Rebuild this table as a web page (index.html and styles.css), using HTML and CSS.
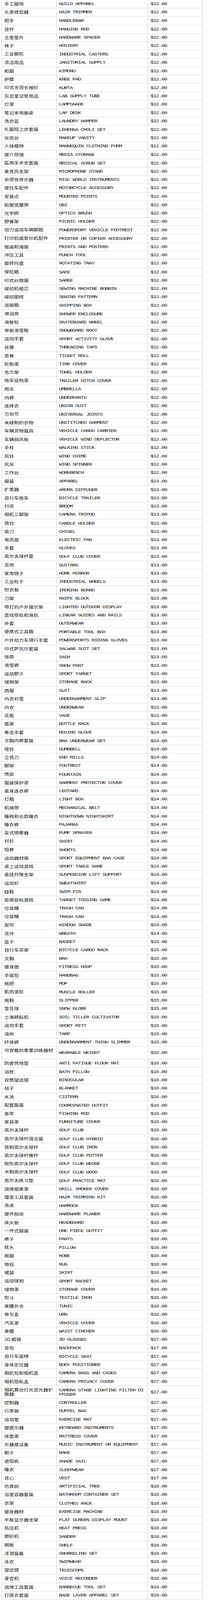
FILE: index.html
```html
<!DOCTYPE html>
<html lang="zh">
<head>
<meta charset="utf-8">
<title>商品价格表</title>
<link rel="stylesheet" href="styles.css">
</head>
<body>
<div class="frame">
<div class="sheet">
<table class="list">
<colgroup><col class="c-zh"><col class="c-en"><col class="c-price"></colgroup>
<tbody>
<tr><td class="zh">手工服饰</td><td class="en">GUILD APPAREL</td><td class="price">$12.00</td></tr>
<tr><td class="zh">头发修剪器</td><td class="en">HAIR TRIMMER</td><td class="price">$12.00</td></tr>
<tr><td class="zh">把手</td><td class="en">HANDLEBAR</td><td class="price">$12.00</td></tr>
<tr><td class="zh">挂杆</td><td class="en">HANGING ROD</td><td class="price">$12.00</td></tr>
<tr><td class="zh">五金垫片</td><td class="en">HARDWARE SPACER</td><td class="price">$12.00</td></tr>
<tr><td class="zh">袜子</td><td class="en">HOSIERY</td><td class="price">$12.00</td></tr>
<tr><td class="zh">工业脚轮</td><td class="en">INDUSTRIAL CASTERS</td><td class="price">$12.00</td></tr>
<tr><td class="zh">清洁用品</td><td class="en">JANITORIAL SUPPLY</td><td class="price">$12.00</td></tr>
<tr><td class="zh">和服</td><td class="en">KIMONO</td><td class="price">$12.00</td></tr>
<tr><td class="zh">护膝</td><td class="en">KNEE PAD</td><td class="price">$12.00</td></tr>
<tr><td class="zh">印式无领长袖衫</td><td class="en">KURTA</td><td class="price">$12.00</td></tr>
<tr><td class="zh">实验室试管用品</td><td class="en">LAB SUPPLY TUBE</td><td class="price">$12.00</td></tr>
<tr><td class="zh">灯罩</td><td class="en">LAMPSHADE</td><td class="price">$12.00</td></tr>
<tr><td class="zh">笔记本电脑桌</td><td class="en">LAP DESK</td><td class="price">$12.00</td></tr>
<tr><td class="zh">洗衣篮</td><td class="en">LAUNDRY HAMPER</td><td class="price">$12.00</td></tr>
<tr><td class="zh">礼服短上衣套装</td><td class="en">LEHENGA CHOLI SET</td><td class="price">$12.00</td></tr>
<tr><td class="zh">化妆台</td><td class="en">MAKEUP VANITY</td><td class="price">$12.00</td></tr>
<tr><td class="zh">人体模特</td><td class="en">MANNEQUIN CLOTHING FORM</td><td class="price">$12.00</td></tr>
<tr><td class="zh">媒介存储</td><td class="en">MEDIA STORAGE</td><td class="price">$12.00</td></tr>
<tr><td class="zh">医用手术衣套装</td><td class="en">MEDICAL SCRUB SET</td><td class="price">$12.00</td></tr>
<tr><td class="zh">麦克风支架</td><td class="en">MICROPHONE STAND</td><td class="price">$12.00</td></tr>
<tr><td class="zh">杂项世界乐器</td><td class="en">MISC WORLD INSTRUMENTS</td><td class="price">$12.00</td></tr>
<tr><td class="zh">摩托车配件</td><td class="en">MOTORCYCLE ACCESSORY</td><td class="price">$12.00</td></tr>
<tr><td class="zh">安装点</td><td class="en">MOUNTED POINTS</td><td class="price">$12.00</td></tr>
<tr><td class="zh">和服宽腰带</td><td class="en">OBI</td><td class="price">$12.00</td></tr>
<tr><td class="zh">光学刷</td><td class="en">OPTICS BRUSH</td><td class="price">$12.00</td></tr>
<tr><td class="zh">野餐架</td><td class="en">PICNIC HOLDER</td><td class="price">$12.00</td></tr>
<tr><td class="zh">动力运动车辆脚踏</td><td class="en">POWERSPORT VEHICLE FOOTREST</td><td class="price">$12.00</td></tr>
<tr><td class="zh">打印机或复印机配件</td><td class="en">PRINTER OR COPIER ACCESSORY</td><td class="price">$12.00</td></tr>
<tr><td class="zh">版画和海报</td><td class="en">PRINTS AND POSTERS</td><td class="price">$12.00</td></tr>
<tr><td class="zh">冲压工具</td><td class="en">PUNCH TOOL</td><td class="price">$12.00</td></tr>
<tr><td class="zh">旋转托盘</td><td class="en">ROTATING TRAY</td><td class="price">$12.00</td></tr>
<tr><td class="zh">保险箱</td><td class="en">SAFE</td><td class="price">$12.00</td></tr>
<tr><td class="zh">印式纱丽服</td><td class="en">SAREE</td><td class="price">$12.00</td></tr>
<tr><td class="zh">缝纫机梭芯</td><td class="en">SEWING MACHINE BOBBIN</td><td class="price">$12.00</td></tr>
<tr><td class="zh">缝纫图样</td><td class="en">SEWING PATTERN</td><td class="price">$12.00</td></tr>
<tr><td class="zh">运输箱</td><td class="en">SHIPPING BOX</td><td class="price">$12.00</td></tr>
<tr><td class="zh">淋浴房</td><td class="en">SHOWER ENCLOSURE</td><td class="price">$12.00</td></tr>
<tr><td class="zh">滑板轮</td><td class="en">SKATEBOARD WHEEL</td><td class="price">$12.00</td></tr>
<tr><td class="zh">单板滑雪靴</td><td class="en">SNOWBOARD BOOT</td><td class="price">$12.00</td></tr>
<tr><td class="zh">运动手套</td><td class="en">SPORT ACTIVITY GLOVE</td><td class="price">$12.00</td></tr>
<tr><td class="zh">丝锥</td><td class="en">THREADING TAPS</td><td class="price">$12.00</td></tr>
<tr><td class="zh">票卷</td><td class="en">TICKET ROLL</td><td class="price">$12.00</td></tr>
<tr><td class="zh">轮胎罩</td><td class="en">TIRE COVER</td><td class="price">$12.00</td></tr>
<tr><td class="zh">毛巾架</td><td class="en">TOWEL HOLDER</td><td class="price">$12.00</td></tr>
<tr><td class="zh">拖车挂钩罩</td><td class="en">TRAILER HITCH COVER</td><td class="price">$12.00</td></tr>
<tr><td class="zh">雨伞</td><td class="en">UMBRELLA</td><td class="price">$12.00</td></tr>
<tr><td class="zh">内裤</td><td class="en">UNDERPANTS</td><td class="price">$12.00</td></tr>
<tr><td class="zh">连体衣</td><td class="en">UNION SUIT</td><td class="price">$12.00</td></tr>
<tr><td class="zh">万向节</td><td class="en">UNIVERSAL JOINTS</td><td class="price">$12.00</td></tr>
<tr><td class="zh">未缝制的衣物</td><td class="en">UNSTITCHED GARMENT</td><td class="price">$12.00</td></tr>
<tr><td class="zh">车辆货物载具</td><td class="en">VEHICLE CARGO CARRIER</td><td class="price">$12.00</td></tr>
<tr><td class="zh">车辆挡风板</td><td class="en">VEHICLE WIND DEFLECTOR</td><td class="price">$12.00</td></tr>
<tr><td class="zh">手杖</td><td class="en">WALKING STICK</td><td class="price">$12.00</td></tr>
<tr><td class="zh">风铃</td><td class="en">WIND CHIME</td><td class="price">$12.00</td></tr>
<tr><td class="zh">风车</td><td class="en">WIND SPINNER</td><td class="price">$12.00</td></tr>
<tr><td class="zh">工作台</td><td class="en">WORKBENCH</td><td class="price">$12.00</td></tr>
<tr><td class="zh">服装</td><td class="en">APPAREL</td><td class="price">$13.00</td></tr>
<tr><td class="zh">扩香器</td><td class="en">AROMA DIFFUSER</td><td class="price">$13.00</td></tr>
<tr><td class="zh">自行车拖车</td><td class="en">BICYCLE TRAILER</td><td class="price">$13.00</td></tr>
<tr><td class="zh">扫帚</td><td class="en">BROOM</td><td class="price">$13.00</td></tr>
<tr><td class="zh">相机三脚架</td><td class="en">CAMERA TRIPOD</td><td class="price">$13.00</td></tr>
<tr><td class="zh">烛台</td><td class="en">CANDLE HOLDER</td><td class="price">$13.00</td></tr>
<tr><td class="zh">凿刀</td><td class="en">CHISEL</td><td class="price">$13.00</td></tr>
<tr><td class="zh">电风扇</td><td class="en">ELECTRIC FAN</td><td class="price">$13.00</td></tr>
<tr><td class="zh">手套</td><td class="en">GLOVES</td><td class="price">$13.00</td></tr>
<tr><td class="zh">高尔夫球杆套</td><td class="en">GOLF CLUB COVER</td><td class="price">$13.00</td></tr>
<tr><td class="zh">吉他</td><td class="en">GUITARS</td><td class="price">$13.00</td></tr>
<tr><td class="zh">家用镜子</td><td class="en">HOME MIRROR</td><td class="price">$13.00</td></tr>
<tr><td class="zh">工业轮子</td><td class="en">INDUSTRIAL WHEELS</td><td class="price">$13.00</td></tr>
<tr><td class="zh">熨衣板</td><td class="en">IRONING BOARD</td><td class="price">$13.00</td></tr>
<tr><td class="zh">刀架</td><td class="en">KNIFE BLOCK</td><td class="price">$13.00</td></tr>
<tr><td class="zh">带灯的户外展示架</td><td class="en">LIGHTED OUTDOOR DISPLAY</td><td class="price">$13.00</td></tr>
<tr><td class="zh">直线导轨和滑轨</td><td class="en">LINEAR GUIDES AND RAILS</td><td class="price">$13.00</td></tr>
<tr><td class="zh">外套</td><td class="en">OUTERWEAR</td><td class="price">$13.00</td></tr>
<tr><td class="zh">便携式工具箱</td><td class="en">PORTABLE TOOL BOX</td><td class="price">$13.00</td></tr>
<tr><td class="zh">户外动力车骑行手套</td><td class="en">POWERSPORTS RIDING GLOVES</td><td class="price">$13.00</td></tr>
<tr><td class="zh">印式萨瓦尔套装</td><td class="en">SALWAR SUIT SET</td><td class="price">$13.00</td></tr>
<tr><td class="zh">饰带</td><td class="en">SASH</td><td class="price">$13.00</td></tr>
<tr><td class="zh">滑雪裤</td><td class="en">SNOW PANT</td><td class="price">$13.00</td></tr>
<tr><td class="zh">运动靶子</td><td class="en">SPORT TARGET</td><td class="price">$13.00</td></tr>
<tr><td class="zh">储物架</td><td class="en">STORAGE RACK</td><td class="price">$13.00</td></tr>
<tr><td class="zh">西服</td><td class="en">SUIT</td><td class="price">$13.00</td></tr>
<tr><td class="zh">内衣衬里</td><td class="en">UNDERGARMENT SLIP</td><td class="price">$13.00</td></tr>
<tr><td class="zh">内衣</td><td class="en">UNDERWEAR</td><td class="price">$13.00</td></tr>
<tr><td class="zh">花瓶</td><td class="en">VASE</td><td class="price">$13.00</td></tr>
<tr><td class="zh">瓶架</td><td class="en">BOTTLE RACK</td><td class="price">$14.00</td></tr>
<tr><td class="zh">拳击手套</td><td class="en">BOXING GLOVE</td><td class="price">$14.00</td></tr>
<tr><td class="zh">文胸内裤套装</td><td class="en">BRA UNDERWEAR SET</td><td class="price">$14.00</td></tr>
<tr><td class="zh">哑铃</td><td class="en">DUMBBELL</td><td class="price">$14.00</td></tr>
<tr><td class="zh">立铣刀</td><td class="en">END MILLS</td><td class="price">$14.00</td></tr>
<tr><td class="zh">脚架</td><td class="en">FOOTREST</td><td class="price">$14.00</td></tr>
<tr><td class="zh">喷泉</td><td class="en">FOUNTAIN</td><td class="price">$14.00</td></tr>
<tr><td class="zh">服装保护罩</td><td class="en">GARMENT PROTECTOR COVER</td><td class="price">$14.00</td></tr>
<tr><td class="zh">紧身连衣裤</td><td class="en">LEOTARD</td><td class="price">$14.00</td></tr>
<tr><td class="zh">灯箱</td><td class="en">LIGHT BOX</td><td class="price">$14.00</td></tr>
<tr><td class="zh">机械带</td><td class="en">MECHANICAL BELT</td><td class="price">$14.00</td></tr>
<tr><td class="zh">睡袍和长款睡衣</td><td class="en">NIGHTGOWN NIGHTSHIRT</td><td class="price">$14.00</td></tr>
<tr><td class="zh">睡衣裤</td><td class="en">PAJAMAS</td><td class="price">$14.00</td></tr>
<tr><td class="zh">泵式喷雾器</td><td class="en">PUMP SPRAYER</td><td class="price">$14.00</td></tr>
<tr><td class="zh">衬衫</td><td class="en">SHIRT</td><td class="price">$14.00</td></tr>
<tr><td class="zh">短裤</td><td class="en">SHORTS</td><td class="price">$14.00</td></tr>
<tr><td class="zh">运动器材袋</td><td class="en">SPORT EQUIPMENT BAG CASE</td><td class="price">$14.00</td></tr>
<tr><td class="zh">桌上运动游戏</td><td class="en">SPORT TABLE GAME</td><td class="price">$14.00</td></tr>
<tr><td class="zh">悬挂升降支架</td><td class="en">SUSPENSION LIFT SUPPORT</td><td class="price">$14.00</td></tr>
<tr><td class="zh">运动衫</td><td class="en">SWEATSHIRT</td><td class="price">$14.00</td></tr>
<tr><td class="zh">蛙鞋</td><td class="en">SWIM FIN</td><td class="price">$14.00</td></tr>
<tr><td class="zh">投掷目标游戏</td><td class="en">TARGET TOSSING GAME</td><td class="price">$14.00</td></tr>
<tr><td class="zh">垃圾桶</td><td class="en">TRASH CAN</td><td class="price">$14.00</td></tr>
<tr><td class="zh">垃圾桶</td><td class="en">TRASH CAN</td><td class="price">$14.00</td></tr>
<tr><td class="zh">窗帘</td><td class="en">WINDOW SHADE</td><td class="price">$14.00</td></tr>
<tr><td class="zh">花环</td><td class="en">WREATH</td><td class="price">$14.00</td></tr>
<tr><td class="zh">篮子</td><td class="en">BASKET</td><td class="price">$15.00</td></tr>
<tr><td class="zh">自行车货架</td><td class="en">BICYCLE CARGO RACK</td><td class="price">$15.00</td></tr>
<tr><td class="zh">文胸</td><td class="en">BRA</td><td class="price">$15.00</td></tr>
<tr><td class="zh">健身圈</td><td class="en">FITNESS HOOP</td><td class="price">$15.00</td></tr>
<tr><td class="zh">手提包</td><td class="en">HANDBAG</td><td class="price">$15.00</td></tr>
<tr><td class="zh">拖把</td><td class="en">MOP</td><td class="price">$15.00</td></tr>
<tr><td class="zh">肌肉滚轮</td><td class="en">MUSCLE ROLLER</td><td class="price">$15.00</td></tr>
<tr><td class="zh">拖鞋</td><td class="en">SLIPPER</td><td class="price">$15.00</td></tr>
<tr><td class="zh">雪花球</td><td class="en">SNOW GLOBE</td><td class="price">$15.00</td></tr>
<tr><td class="zh">土壤耕耘机</td><td class="en">SOIL TILLER CULTIVATOR</td><td class="price">$15.00</td></tr>
<tr><td class="zh">运动手套</td><td class="en">SPORT MITT</td><td class="price">$15.00</td></tr>
<tr><td class="zh">油布</td><td class="en">TARP</td><td class="price">$15.00</td></tr>
<tr><td class="zh">纤体裤</td><td class="en">UNDERGARMENT THIGH SLIMMER</td><td class="price">$15.00</td></tr>
<tr><td class="zh zh-overflow">可穿戴的重量训练器材</td><td class="en">WEARABLE WEIGHT</td><td class="price">$15.00</td></tr>
<tr><td class="zh">防疲劳地垫</td><td class="en">ANTI FATIGUE FLOOR MAT</td><td class="price">$16.00</td></tr>
<tr><td class="zh">浴枕</td><td class="en">BATH PILLOW</td><td class="price">$16.00</td></tr>
<tr><td class="zh">双筒望远镜</td><td class="en">BINOCULAR</td><td class="price">$16.00</td></tr>
<tr><td class="zh">毯子</td><td class="en">BLANKET</td><td class="price">$16.00</td></tr>
<tr><td class="zh">水池</td><td class="en">CISTERN</td><td class="price">$16.00</td></tr>
<tr><td class="zh">配套服装</td><td class="en">COORDINATED OUTFIT</td><td class="price">$16.00</td></tr>
<tr><td class="zh">鱼竿</td><td class="en">FISHING ROD</td><td class="price">$16.00</td></tr>
<tr><td class="zh">家具罩</td><td class="en">FURNITURE COVER</td><td class="price">$16.00</td></tr>
<tr><td class="zh">高尔夫球杆</td><td class="en">GOLF CLUB</td><td class="price">$16.00</td></tr>
<tr><td class="zh">高尔夫球杆混合装</td><td class="en">GOLF CLUB HYBRID</td><td class="price">$16.00</td></tr>
<tr><td class="zh">铁制高尔夫球杆</td><td class="en">GOLF CLUB IRON</td><td class="price">$16.00</td></tr>
<tr><td class="zh">高尔夫球杆推杆</td><td class="en">GOLF CLUB PUTTER</td><td class="price">$16.00</td></tr>
<tr><td class="zh">楔形高尔夫球杆</td><td class="en">GOLF CLUB WEDGE</td><td class="price">$16.00</td></tr>
<tr><td class="zh">木制高尔夫球杆</td><td class="en">GOLF CLUB WOOD</td><td class="price">$16.00</td></tr>
<tr><td class="zh">高尔夫练习垫</td><td class="en">GOLF PRACTICE MAT</td><td class="price">$16.00</td></tr>
<tr><td class="zh">烧烤烟熏罩</td><td class="en">GRILL SMOKER COVER</td><td class="price">$16.00</td></tr>
<tr><td class="zh">理发工具套装</td><td class="en">HAIR TRIMMING KIT</td><td class="price">$16.00</td></tr>
<tr><td class="zh">吊床</td><td class="en">HAMMOCK</td><td class="price">$16.00</td></tr>
<tr><td class="zh">硬件刨床</td><td class="en">HARDWARE PLANER</td><td class="price">$16.00</td></tr>
<tr><td class="zh">床头板</td><td class="en">HEADBOARD</td><td class="price">$16.00</td></tr>
<tr><td class="zh">一件式服装</td><td class="en">ONE PIECE OUTFIT</td><td class="price">$16.00</td></tr>
<tr><td class="zh">裤子</td><td class="en">PANTS</td><td class="price">$16.00</td></tr>
<tr><td class="zh">枕头</td><td class="en">PILLOW</td><td class="price">$16.00</td></tr>
<tr><td class="zh">袍服</td><td class="en">ROBE</td><td class="price">$16.00</td></tr>
<tr><td class="zh">地毯</td><td class="en">RUG</td><td class="price">$16.00</td></tr>
<tr><td class="zh">裙装</td><td class="en">SKIRT</td><td class="price">$16.00</td></tr>
<tr><td class="zh">运动球拍</td><td class="en">SPORT RACKET</td><td class="price">$16.00</td></tr>
<tr><td class="zh">储物罩</td><td class="en">STORAGE COVER</td><td class="price">$16.00</td></tr>
<tr><td class="zh">熨斗</td><td class="en">TEXTILE IRON</td><td class="price">$16.00</td></tr>
<tr><td class="zh">束腰外衣</td><td class="en">TUNIC</td><td class="price">$16.00</td></tr>
<tr><td class="zh">骨灰盒</td><td class="en">URN</td><td class="price">$16.00</td></tr>
<tr><td class="zh">汽车罩</td><td class="en">VEHICLE COVER</td><td class="price">$16.00</td></tr>
<tr><td class="zh">束腰</td><td class="en">WAIST CINCHER</td><td class="price">$16.00</td></tr>
<tr><td class="zh">3D 眼镜</td><td class="en">3D GLASSES</td><td class="price">$17.00</td></tr>
<tr><td class="zh">背包</td><td class="en">BACKPACK</td><td class="price">$17.00</td></tr>
<tr><td class="zh">自行车座椅</td><td class="en">BICYCLE SEAT</td><td class="price">$17.00</td></tr>
<tr><td class="zh">身体定位器</td><td class="en">BODY POSITIONER</td><td class="price">$17.00</td></tr>
<tr><td class="zh">相机包和相机盒</td><td class="en">CAMERA BAGS AND CASES</td><td class="price">$17.00</td></tr>
<tr><td class="zh">相机隐私盖</td><td class="en">CAMERA PRIVACY COVER</td><td class="price">$17.00</td></tr>
<tr><td class="zh">相机舞台灯光滤光器扩散器</td><td class="en">CAMERA STAGE LIGHTING FILTER DIFFUSER</td><td class="price">$17.00</td></tr>
<tr><td class="zh">控制器</td><td class="en">CONTROLLER</td><td class="price">$17.00</td></tr>
<tr><td class="zh">行李袋</td><td class="en">DUFFEL BAG</td><td class="price">$17.00</td></tr>
<tr><td class="zh">运动垫</td><td class="en">EXERCISE MAT</td><td class="price">$17.00</td></tr>
<tr><td class="zh">键盘乐器</td><td class="en">KEYBOARD INSTRUMENTS</td><td class="price">$17.00</td></tr>
<tr><td class="zh">床垫罩</td><td class="en">MATTRESS COVER</td><td class="price">$17.00</td></tr>
<tr><td class="zh">乐器或设备</td><td class="en">MUSIC INSTRUMENT OR EQUIPMENT</td><td class="price">$17.00</td></tr>
<tr><td class="zh">耙子</td><td class="en">RAKE</td><td class="price">$17.00</td></tr>
<tr><td class="zh">遮阳帆</td><td class="en">SHADE SAIL</td><td class="price">$17.00</td></tr>
<tr><td class="zh">睡衣</td><td class="en">SLEEPWEAR</td><td class="price">$17.00</td></tr>
<tr><td class="zh">背心</td><td class="en">VEST</td><td class="price">$17.00</td></tr>
<tr><td class="zh">仿真树</td><td class="en">ARTIFICIAL TREE</td><td class="price">$18.00</td></tr>
<tr><td class="zh">浴室容器套装</td><td class="en">BATHROOM CONTAINER SET</td><td class="price">$18.00</td></tr>
<tr><td class="zh">衣架</td><td class="en">CLOTHES RACK</td><td class="price">$18.00</td></tr>
<tr><td class="zh">健身器材</td><td class="en">EXERCISE MACHINE</td><td class="price">$18.00</td></tr>
<tr><td class="zh">平板显示器支架</td><td class="en">FLAT SCREEN DISPLAY MOUNT</td><td class="price">$18.00</td></tr>
<tr><td class="zh">热压机</td><td class="en">HEAT PRESS</td><td class="price">$18.00</td></tr>
<tr><td class="zh">磨砂机</td><td class="en">SANDER</td><td class="price">$18.00</td></tr>
<tr><td class="zh">搁板</td><td class="en">SHELF</td><td class="price">$18.00</td></tr>
<tr><td class="zh">浮潜装备</td><td class="en">SNORKELING SET</td><td class="price">$18.00</td></tr>
<tr><td class="zh">泳衣</td><td class="en">SWIMWEAR</td><td class="price">$18.00</td></tr>
<tr><td class="zh">望远镜</td><td class="en">TELESCOPE</td><td class="price">$18.00</td></tr>
<tr><td class="zh">录音机</td><td class="en">VOICE RECORDER</td><td class="price">$18.00</td></tr>
<tr><td class="zh">烧烤工具套装</td><td class="en">BARBECUE TOOL SET</td><td class="price">$19.00</td></tr>
<tr><td class="zh">打底衣套装</td><td class="en">BASE LAYER APPAREL SET</td><td class="price">$19.00</td></tr>
</tbody>
</table>
</div>
</div>
</body>
</html>
```

FILE: styles.css
```css
html, body {
  margin: 0;
  padding: 0;
  background: #ffffff;
}

/* The capture frame of this sandbox is 4096px tall; the sheet is laid out
   at the reference's 5198px height and fitted into that frame. */
.frame {
  height: 4096px;
  overflow: hidden;
}

.sheet {
  transform: scaleY(0.788);
  transform-origin: 0 0;
}

.list {
  border-collapse: collapse;
  table-layout: fixed;
  width: 515px;
  margin: -1px 0 0 4px;
  color: #111111;
}

.c-zh { width: 141px; }
.c-en { width: 234px; }
.c-price { width: 140px; }

.list td {
  border: 1px solid #cfcfcf;
  padding: 6px 6px;
  line-height: 14.2px;
  vertical-align: middle;
  text-align: left;
}

.list td.en {
  padding-left: 5px;
}

.zh {
  font-family: "Noto Sans CJK SC", "Noto Sans CJK TC", sans-serif;
  font-size: 12.5px;
}

.en,
.price {
  font-family: "Liberation Mono", "DejaVu Sans Mono", monospace;
  font-size: 14px;
  letter-spacing: -1.4px;
  word-break: break-all;
  color: #1a1a1a;
}

.zh-overflow::after {
  content: "";
  display: block;
  height: 14.2px;
}
```
